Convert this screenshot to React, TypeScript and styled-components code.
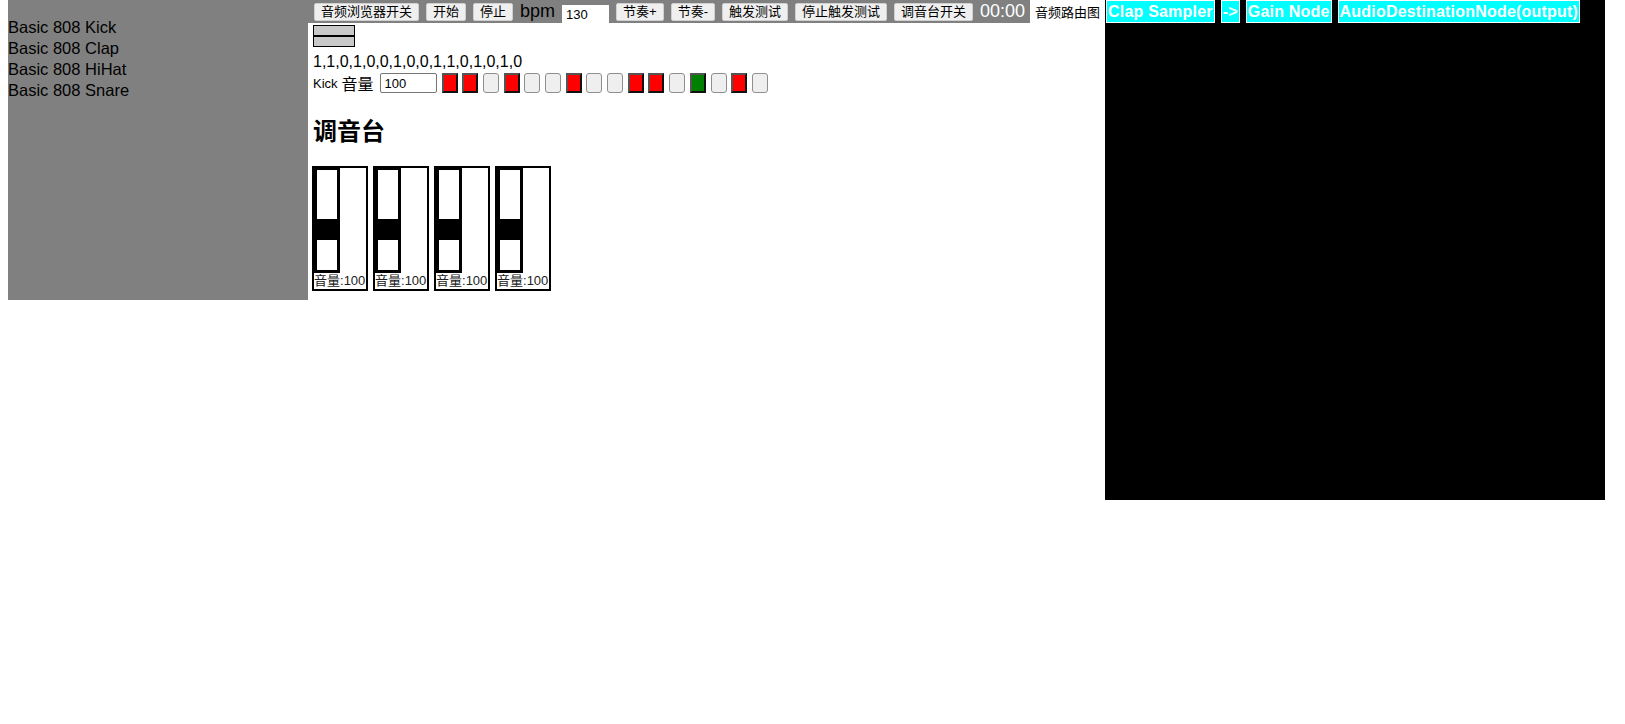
import React, { FC } from "react";
import styled, { createGlobalStyle } from "styled-components";

const FONT = `"Liberation Sans", "Noto Sans CJK SC", sans-serif`;

const samples = ["Basic 808 Kick", "Basic 808 Clap", "Basic 808 HiHat", "Basic 808 Snare"];
const pattern = [1, 1, 0, 1, 0, 0, 1, 0, 0, 1, 1, 0, 1, 0, 1, 0];
const currentStep = 12;
const channels = [100, 100, 100, 100];
const routeNodes = ["Clap Sampler", "->", "Gain Node", "AudioDestinationNode(output)"];

const GlobalStyle = createGlobalStyle`
  body {
    margin: 0 8px;
    font-family: ${FONT};
    color: #000;
    background: #fff;
  }
`;

const Page = styled.div`
  display: flex;
  align-items: flex-start;
`;

const SamplePanel = styled.ul`
  width: 300px;
  height: 300px;
  margin: 0;
  padding: 17px 0 0;
  box-sizing: border-box;
  list-style: none;
  background: #808080;
  font-size: 16.5px;
  line-height: 21px;
  flex-shrink: 0;
`;

const Middle = styled.div`
  width: 722px;
  flex-shrink: 0;
`;

const Toolbar = styled.div`
  display: flex;
  align-items: flex-start;
  gap: 7px;
  height: 23px;
  padding-left: 6px;
  background: #808080;
`;

const ToolButton = styled.button`
  margin-top: 3px;
  height: 18px;
  padding: 0 6px;
  font-family: ${FONT};
  font-size: 13px;
  line-height: 16px;
  color: #000;
  background: #efefef;
  border: 1px solid #d0d0d0;
  border-radius: 2px;
  white-space: nowrap;
`;

const BigLabel = styled.span<{ $light?: boolean }>`
  font-size: 18px;
  line-height: 23px;
  color: ${(p) => (p.$light ? "#fff" : "#000")};
`;

const BpmInput = styled.input`
  margin-top: 5px;
  width: 47px;
  height: 19px;
  box-sizing: border-box;
  padding: 0 4px;
  font-family: ${FONT};
  font-size: 13px;
  border: none;
  background: #fff;
`;

const Content = styled.div`
  padding-left: 5px;
`;

const Meter = styled.div`
  margin-top: 2px;
  width: 42px;
`;

const MeterBar = styled.div`
  height: 9px;
  background: #c8c8c8;
  border: 1px solid #000;
`;

const PatternText = styled.div`
  margin-top: 5px;
  font-size: 16px;
  line-height: 20px;
`;

const TrackRow = styled.div`
  display: flex;
  align-items: center;
  height: 22px;
`;

const TrackName = styled.span`
  font-size: 13px;
  margin-right: 4px;
`;

const VolumeLabel = styled.span`
  font-size: 16px;
  margin-right: 6px;
`;

const VolumeInput = styled.input`
  width: 57px;
  height: 20px;
  box-sizing: border-box;
  padding: 0 4px;
  margin-right: 5px;
  font-family: ${FONT};
  font-size: 13px;
  border: 1px solid #767676;
  border-radius: 2px;
`;

const Steps = styled.div`
  display: flex;
  gap: 4.7px;
`;

const Step = styled.button<{ $on: boolean; $current: boolean }>`
  width: 16px;
  height: 20px;
  padding: 0;
  box-sizing: border-box;
  background: ${(p) => (p.$current ? "#008000" : p.$on ? "#ff0000" : "#efefef")};
  border-style: solid;
  border-width: ${(p) => (p.$on || p.$current ? "2px" : "1px")};
  border-color: ${(p) =>
    p.$on || p.$current ? "#555 #111 #111 #555" : "#8f8f8f"};
  border-radius: ${(p) => (p.$on || p.$current ? "0" : "3px")};
`;

const MixerTitle = styled.h2`
  margin: 24px 0 20px;
  font-size: 24px;
  line-height: 28px;
  font-weight: bold;
`;

const Mixer = styled.div`
  display: flex;
  gap: 5px;
  margin-left: -1px;
`;

const Channel = styled.div`
  width: 56px;
  height: 125px;
  box-sizing: border-box;
  border: 2px solid #000;
  background: #fff;
  display: flex;
  flex-direction: column;
`;

const Fader = styled.div`
  width: 26px;
  height: 105px;
  box-sizing: border-box;
  border: 3px solid #000;
  border-top-width: 2px;
  display: flex;
  flex-direction: column;
`;

const FaderThumb = styled.div`
  height: 21px;
  background: #000;
  flex-shrink: 0;
`;

const ChannelLabel = styled.div`
  font-size: 13px;
  line-height: 16px;
  white-space: nowrap;
  overflow: hidden;
  color: #222;
`;

const RouteLabel = styled.span`
  margin: 4px 5px 0;
  font-size: 13px;
  line-height: 17px;
  white-space: nowrap;
`;

const RouteCanvas = styled.div`
  width: 500px;
  height: 500px;
  flex-shrink: 0;
  background: #000;
  display: flex;
  align-items: flex-start;
  gap: 6px;
  padding: 0 1px;
  box-sizing: border-box;
`;

const RouteNode = styled.span`
  padding: 0 1px;
  border: 1px solid #fff;
  background: #00ffff;
  color: #fff;
  font-size: 16px;
  font-weight: bold;
  line-height: 21px;
  letter-spacing: 0.2px;
  white-space: nowrap;
`;

const App: FC = () => {
  return (
    <>
      <GlobalStyle />
      <Page>
        <SamplePanel>
          {samples.map((s) => (
            <li key={s}>{s}</li>
          ))}
        </SamplePanel>

        <Middle>
          <Toolbar>
            <ToolButton>音频浏览器开关</ToolButton>
            <ToolButton>开始</ToolButton>
            <ToolButton>停止</ToolButton>
            <BigLabel>bpm</BigLabel>
            <BpmInput defaultValue="130" />
            <ToolButton>节奏+</ToolButton>
            <ToolButton>节奏-</ToolButton>
            <ToolButton>触发测试</ToolButton>
            <ToolButton>停止触发测试</ToolButton>
            <ToolButton>调音台开关</ToolButton>
            <BigLabel $light>00:00</BigLabel>
          </Toolbar>

          <Content>
            <Meter>
              <MeterBar />
              <MeterBar />
            </Meter>
            <PatternText>{pattern.join(",")}</PatternText>
            <TrackRow>
              <TrackName>Kick</TrackName>
              <VolumeLabel>音量</VolumeLabel>
              <VolumeInput defaultValue="100" />
              <Steps>
                {pattern.map((v, i) => (
                  <Step key={i} $on={v === 1} $current={i === currentStep} />
                ))}
              </Steps>
            </TrackRow>

            <MixerTitle>调音台</MixerTitle>
            <Mixer>
              {channels.map((vol, i) => (
                <Channel key={i}>
                  <Fader>
                    <div style={{ height: 49 }} />
                    <FaderThumb />
                  </Fader>
                  <ChannelLabel>音量:{vol}</ChannelLabel>
                </Channel>
              ))}
            </Mixer>
          </Content>
        </Middle>

        <RouteLabel>音频路由图</RouteLabel>
        <RouteCanvas>
          {routeNodes.map((n) => (
            <RouteNode key={n}>{n}</RouteNode>
          ))}
        </RouteCanvas>
      </Page>
    </>
  );
};

export default App;
